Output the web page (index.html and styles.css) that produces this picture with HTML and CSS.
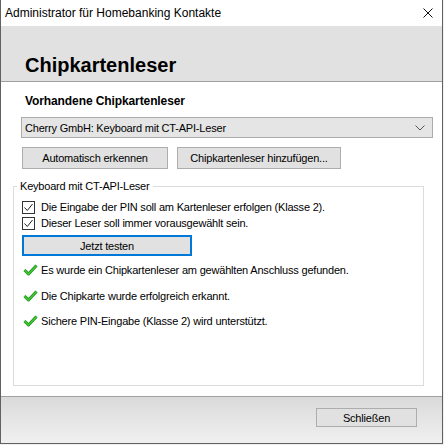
FILE: index.html
```html
<!DOCTYPE html>
<html lang="de">
<head>
<meta charset="utf-8">
<title>Chipkartenleser</title>
<link rel="stylesheet" href="styles.css">
</head>
<body>
<div class="window">
  <div class="titlebar">
    <span class="title">Administrator für Homebanking Kontakte</span>
    <svg class="close" width="10" height="10" viewBox="0 0 10 10"><path d="M0.5 0.5 L9.5 9.5 M9.5 0.5 L0.5 9.5" stroke="#111" stroke-width="1" fill="none"/></svg>
  </div>
  <div class="header"><h1>Chipkartenleser</h1></div>
  <div class="content">
    <div class="section-title">Vorhandene Chipkartenleser</div>
    <div class="select">
      <span>Cherry GmbH: Keyboard mit CT-API-Leser</span>
      <svg class="chevron" width="10" height="6" viewBox="0 0 10 6"><path d="M0.5 0.5 L5 5 L9.5 0.5" stroke="#555" stroke-width="1" fill="none"/></svg>
    </div>
    <div class="btn-row">
      <button class="btn btn-auto">Automatisch erkennen</button>
      <button class="btn btn-add">Chipkartenleser hinzufügen...</button>
    </div>
    <fieldset class="group">
      <legend>Keyboard mit CT-API-Leser</legend>
      <div class="group-body">
        <label class="check"><span class="box"><svg width="11" height="11" viewBox="0 0 11 11"><path d="M1.5 5.5 L4.3 8.5 L9.5 2" stroke="#222" stroke-width="1" fill="none"/></svg></span>Die Eingabe der PIN soll am Kartenleser erfolgen (Klasse 2).</label>
        <label class="check"><span class="box"><svg width="11" height="11" viewBox="0 0 11 11"><path d="M1.5 5.5 L4.3 8.5 L9.5 2" stroke="#222" stroke-width="1" fill="none"/></svg></span>Dieser Leser soll immer vorausgewählt sein.</label>
        <button class="btn btn-test">Jetzt testen</button>
        <div class="results">
          <div class="result"><svg class="ok" width="15" height="12" viewBox="0 0 15 12"><path d="M1.5 6 L5.5 10 L13.5 1.5" stroke="#1e8c1e" stroke-width="3" fill="none" stroke-linejoin="round"/><path d="M1.5 6 L5.5 10 L13.5 1.5" stroke="#3fcf2f" stroke-width="1.4" fill="none"/></svg>Es wurde ein Chipkartenleser am gewählten Anschluss gefunden.</div>
          <div class="result"><svg class="ok" width="15" height="12" viewBox="0 0 15 12"><path d="M1.5 6 L5.5 10 L13.5 1.5" stroke="#1e8c1e" stroke-width="3" fill="none" stroke-linejoin="round"/><path d="M1.5 6 L5.5 10 L13.5 1.5" stroke="#3fcf2f" stroke-width="1.4" fill="none"/></svg>Die Chipkarte wurde erfolgreich erkannt.</div>
          <div class="result"><svg class="ok" width="15" height="12" viewBox="0 0 15 12"><path d="M1.5 6 L5.5 10 L13.5 1.5" stroke="#1e8c1e" stroke-width="3" fill="none" stroke-linejoin="round"/><path d="M1.5 6 L5.5 10 L13.5 1.5" stroke="#3fcf2f" stroke-width="1.4" fill="none"/></svg>Sichere PIN-Eingabe (Klasse 2) wird unterstützt.</div>
        </div>
      </div>
    </fieldset>
  </div>
  <div class="footer"><button class="btn btn-close">Schließen</button></div>
</div>
</body>
</html>
```
FILE: styles.css
```css
* { box-sizing: border-box; }
html, body { margin: 0; padding: 0; background: #f0f0f0; }
body {
  font-family: "Liberation Sans", Arial, sans-serif;
  font-size: 11px;
  letter-spacing: -0.2px;
  color: #000;
}
.window {
  width: 443px;
  height: 444px;
  display: flex;
  flex-direction: column;
  border: 1px solid #616161;
  border-top: none;
  background: #fff;
}
.titlebar {
  height: 26px;
  flex: none;
  display: flex;
  align-items: center;
  justify-content: space-between;
  padding: 0 9px 1px 4px;
  background: #fff;
}
.title { font-size: 12px; letter-spacing: 0; }
.close { display: block; }
.header {
  height: 56px;
  flex: none;
  background: #e1e1e1;
  border-bottom: 1px solid #a0a0a0;
  padding: 28px 0 0 24px;
}
.header h1 {
  margin: 0;
  font-size: 20px;
  line-height: 22px;
  font-weight: bold;
  letter-spacing: 0;
}
.content {
  flex: 1;
  padding: 11px 18px 10px 12px;
  display: flex;
  flex-direction: column;
}
.section-title {
  font-weight: bold;
  font-size: 12px;
  letter-spacing: -0.1px;
  line-height: 16px;
  height: 16px;
  padding-left: 12px;
}
.select {
  margin: 8px 0 0 8px;
  height: 21px;
  width: 412px;
  background: #e5e5e5;
  border: 1px solid #acacac;
  display: flex;
  align-items: center;
  justify-content: space-between;
  padding: 0 7px 0 3px;
}
.btn {
  font-family: inherit;
  font-size: 11px;
  letter-spacing: -0.2px;
  color: #000;
  background: #e1e1e1;
  border: 1px solid #adadad;
  padding: 0;
  margin: 0;
}
.btn-row {
  display: flex;
  gap: 9px;
  margin: 9px 0 0 9px;
}
.btn-auto { width: 146px; height: 22px; }
.btn-add { width: 164px; height: 22px; }
.group {
  margin: 9px 0 0 0;
  padding: 0;
  border: 1px solid #dcdcdc;
  flex: 1;
  min-width: 0;
}
.group legend {
  margin-left: 3px;
  padding: 0 3px;
  line-height: 16px;
}
.group-body {
  padding: 5px 0 0 8px;
  display: flex;
  flex-direction: column;
  align-items: flex-start;
}
.check {
  display: flex;
  align-items: center;
  height: 16px;
}
.box {
  width: 13px;
  height: 13px;
  border: 1px solid #333;
  background: #fff;
  margin-right: 6px;
  display: flex;
  align-items: center;
  justify-content: center;
}
.box svg { display: block; }
.btn-test {
  margin-top: 4px;
  width: 170px;
  height: 21px;
  border: 2px solid #0078d7;
}
.results {
  margin-top: 6px;
  display: flex;
  flex-direction: column;
  gap: 9.5px;
}
.result {
  display: flex;
  align-items: center;
  height: 16px;
  padding-left: 1px;
}
.ok { display: block; margin-right: 3px; }
.footer {
  height: 47px;
  flex: none;
  border-top: 1px solid #a0a0a0;
  background: linear-gradient(#dadada, #f0f0f0);
  display: flex;
  justify-content: flex-end;
  align-items: flex-start;
  padding: 11px 25px 0 0;
}
.btn-close { width: 101px; height: 19px; }
```
